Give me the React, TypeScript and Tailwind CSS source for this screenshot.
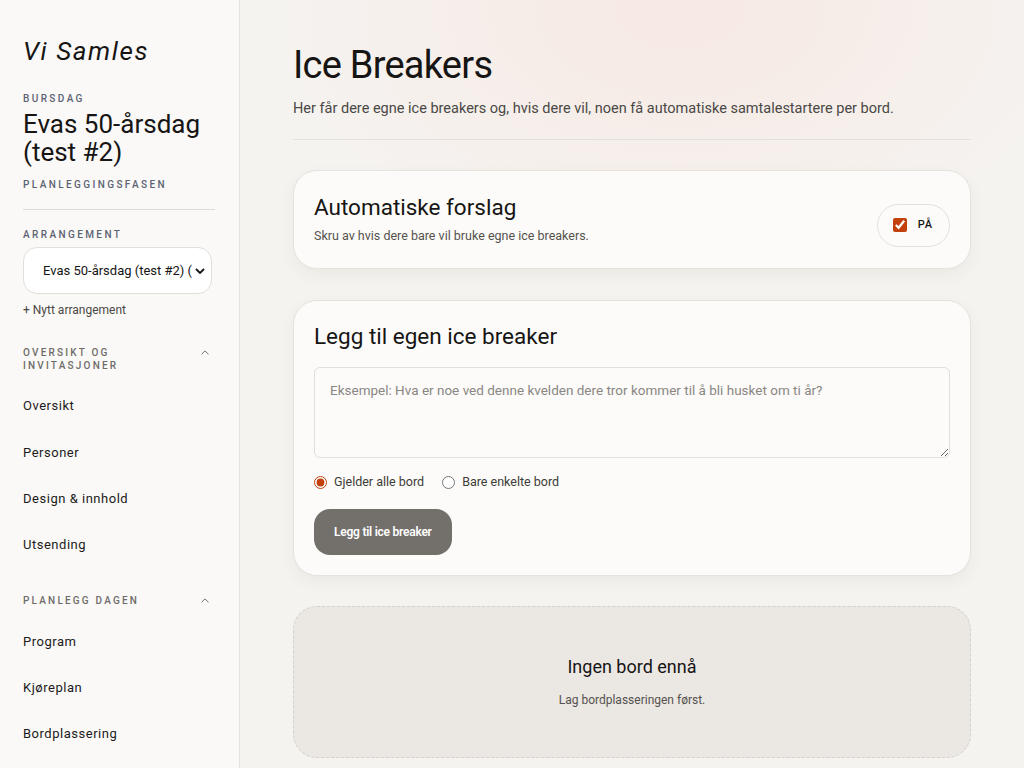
import { ChevronUp } from 'lucide-react'

const font = "font-['Roboto','Liberation_Sans',sans-serif]"

function NavGroup({ title, items, first }: { title: string[]; items: string[]; first?: boolean }) {
  return (
    <div className={first ? 'mt-[27px]' : 'mt-[26px]'}>
      <div className="flex items-start justify-between pr-[4px]">
        <div className="text-[10px] leading-[13px] font-medium tracking-[0.22em] text-[#6e6c69]">
          {title.map((t) => (
            <div key={t}>{t}</div>
          ))}
        </div>
        <ChevronUp className="h-[13px] w-[14px] text-[#6e6c69]" strokeWidth={1.8} />
      </div>
      <ul className="mt-[11px]">
        {items.map((item) => (
          <li key={item} className="flex h-[46.3px] items-center text-[13px] tracking-[0.04em] text-[#1c1b1a]">
            {item}
          </li>
        ))}
      </ul>
    </div>
  )
}

export default function App() {
  return (
    <div className={`flex h-[768px] w-[1024px] overflow-hidden bg-[#f5f3f0] ${font}`}>
      {/* Sidebar */}
      <aside className="w-[240px] shrink-0 border-r border-[#e6e2dd] bg-[#faf9f7] px-[23px] pt-[34px]">
        <div className="text-[26px] leading-[34px] italic tracking-[0.06em] text-[#161514]">Vi Samles</div>
        <div className="mt-[23px] text-[10px] font-medium tracking-[0.24em] text-[#5c6373]">BURSDAG</div>
        <div className="mt-[4px] text-[26px] leading-[28px] text-[#161514]">Evas 50-årsdag (test #2)</div>
        <div className="mt-[11px] text-[10px] font-medium tracking-[0.24em] text-[#5c6373]">PLANLEGGINGSFASEN</div>
        <div className="mt-[17px] mr-[1px] h-px bg-[#dedad5]" />
        <div className="mt-[17px] text-[10px] font-medium tracking-[0.24em] text-[#5c6373]">ARRANGEMENT</div>
        <div className="mt-[5px] mr-[4px] flex h-[47px] items-center rounded-[14px] border border-[#e2ded9] bg-white pl-[19px] pr-[6px] text-[13px] text-[#161514]">
          <span className="flex-1 overflow-hidden whitespace-nowrap">Evas 50-årsdag (test #2) (</span>
          <svg viewBox="0 0 10 6" className="ml-[2px] h-[6px] w-[10px]">
            <path d="M1 1l4 4 4-4" fill="none" stroke="#161514" strokeWidth="1.8" />
          </svg>
        </div>
        <div className="mt-[7px] text-[12px] text-[#4a4845]">+ Nytt arrangement</div>
        <NavGroup first title={['OVERSIKT OG', 'INVITASJONER']} items={['Oversikt', 'Personer', 'Design & innhold', 'Utsending']} />
        <NavGroup title={['PLANLEGG DAGEN']} items={['Program', 'Kjøreplan', 'Bordplassering']} />
      </aside>

      {/* Main */}
      <main className="flex-1 bg-[radial-gradient(ellipse_420px_260px_at_440px_10px,#f7e9e3,transparent)] px-[53px] pt-[41px]">
        <h1 className="text-[38px] leading-[48px] tracking-[-0.02em] text-[#161514]">Ice Breakers</h1>
        <p className="mt-[9px] text-[14.5px] text-[#4a4845]">
          Her får dere egne ice breakers og, hvis dere vil, noen få automatiske samtalestartere per bord.
        </p>
        <div className="mt-[19px] h-px bg-[#e4e0db]" />

        <section className="mt-[30px] flex h-[99px] items-center justify-between rounded-[24px] border border-[#e6e2dd] bg-[#fcfbf9] px-[20px] shadow-[0_6px_16px_rgba(60,40,20,0.05)]">
          <div>
            <h2 className="text-[22.5px] leading-[28px] text-[#161514]">Automatiske forslag</h2>
            <p className="mt-[6px] text-[12.5px] text-[#55524e]">Skru av hvis dere bare vil bruke egne ice breakers.</p>
          </div>
          <label className="mt-[12px] flex h-[43px] items-center gap-[11px] rounded-full border border-[#e4e0db] bg-[#fcfbf9] pl-[15px] pr-[16px] text-[11px] font-medium tracking-[0.08em] text-[#161514]">
            <input type="checkbox" defaultChecked className="h-[14px] w-[14px] accent-[#c2410c]" />
            PÅ
          </label>
        </section>

        <section className="mt-[31px] rounded-[24px] border border-[#e6e2dd] bg-[#fcfbf9] px-[20px] pt-[21px] pb-[20px] shadow-[0_6px_16px_rgba(60,40,20,0.05)]">
          <h2 className="text-[22.5px] leading-[28px] text-[#161514]">Legg til egen ice breaker</h2>
          <textarea
            placeholder="Eksempel: Hva er noe ved denne kvelden dere tror kommer til å bli husket om ti år?"
            className="mt-[17px] block h-[91px] w-full rounded-[6px] border border-[#e2ded9] bg-[#fcfbf9] px-[15px] py-[12px] text-[13.5px] text-[#161514] outline-none placeholder:text-[#8a8783]"
          />
          <div className="mt-[15px] flex items-center gap-[18px] text-[12.5px] text-[#3d3b38]">
            <label className="flex items-center gap-[7px]">
              <input type="radio" name="scope" defaultChecked className="m-0 h-[13px] w-[13px] accent-[#c2410c]" />
              Gjelder alle bord
            </label>
            <label className="flex items-center gap-[7px]">
              <input type="radio" name="scope" className="m-0 h-[13px] w-[13px] accent-[#c2410c]" />
              Bare enkelte bord
            </label>
          </div>
          <button className="mt-[17px] h-[46px] rounded-[16px] bg-[#73706c] px-[20px] text-[12px] font-semibold tracking-[-0.02em] text-white">
            Legg til ice breaker
          </button>
        </section>

        <section className="mt-[30px] flex h-[152px] flex-col items-center justify-center rounded-[24px] border border-dashed border-[#d6d1cb] bg-[#ebe7e3] pb-[2px]">
          <h3 className="text-[18px] text-[#161514]">Ingen bord ennå</h3>
          <p className="mt-[11px] text-[12px] text-[#55524e]">Lag bordplasseringen først.</p>
        </section>
      </main>
    </div>
  )
}
